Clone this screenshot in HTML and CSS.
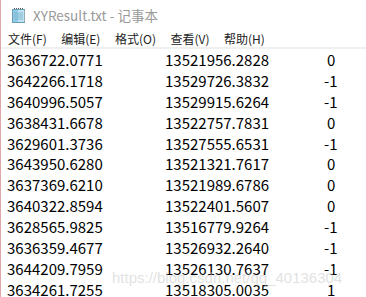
FILE: index.html
```html
<!DOCTYPE html>
<html>
<head>
<meta charset="utf-8">
<link rel="stylesheet" href="styles.css">
</head>
<body>
<div class="win">
  <div class="titlebar">
    <svg class="icon" width="16" height="16" viewBox="0 0 16 16">
      <rect x="1.5" y="2.5" width="12" height="13" fill="#bfe3f3" stroke="#6a9fb8"/>
      <rect x="2" y="3" width="5" height="12" fill="#8fcbe6"/>
      <line x1="3" y1="6" x2="12" y2="6" stroke="#7fb6cf"/>
      <line x1="3" y1="8" x2="12" y2="8" stroke="#7fb6cf"/>
      <line x1="3" y1="10" x2="12" y2="10" stroke="#7fb6cf"/>
      <line x1="3" y1="12" x2="12" y2="12" stroke="#7fb6cf"/>
      <path d="M3 1.5 h10" stroke="#555" stroke-dasharray="1 1"/>
      <path d="M13.5 3 v12" stroke="#9aa" />
    </svg>
    <span class="title">XYResult.txt - 记事本</span>
  </div>
  <div class="menubar">
    <span>文件(F)</span>
    <span>编辑(E)</span>
    <span>格式(O)</span>
    <span>查看(V)</span>
    <span>帮助(H)</span>
  </div>
  <div class="content">
    <div class="row"><span>3636722.0771</span><span>13521956.2828</span><span class="z">0</span></div>
    <div class="row"><span>3642266.1718</span><span>13529726.3832</span><span class="n">-1</span></div>
    <div class="row"><span>3640996.5057</span><span>13529915.6264</span><span class="n">-1</span></div>
    <div class="row"><span>3638431.6678</span><span>13522757.7831</span><span class="z">0</span></div>
    <div class="row"><span>3629601.3736</span><span>13527555.6531</span><span class="n">-1</span></div>
    <div class="row"><span>3643950.6280</span><span>13521321.7617</span><span class="z">0</span></div>
    <div class="row"><span>3637369.6210</span><span>13521989.6786</span><span class="z">0</span></div>
    <div class="row"><span>3640322.8594</span><span>13522401.5607</span><span class="z">0</span></div>
    <div class="row"><span>3628565.9825</span><span>13516779.9264</span><span class="n">-1</span></div>
    <div class="row"><span>3636359.4677</span><span>13526932.2640</span><span class="n">-1</span></div>
    <div class="row"><span>3644209.7959</span><span>13526130.7637</span><span class="n">-1</span></div>
    <div class="row"><span>3634261.7255</span><span>13518305.0035</span><span class="z">1</span></div>
    <div class="watermark">https://blog.csdn.net/qq_40136304</div>
  </div>
</div>
</body>
</html>
```
FILE: styles.css
```css
html, body {
  margin: 0;
  padding: 0;
  background: #fff;
}
.win {
  width: 366px;
  height: 297px;
  overflow: hidden;
  border-left: 1px solid #e0a8a8;
  box-sizing: border-box;
  position: relative;
}
.titlebar {
  height: 29px;
  display: flex;
  align-items: center;
  padding-left: 10px;
  gap: 6px;
}
.icon {
  display: block;
}
.title {
  font-family: "Noto Sans CJK SC", "Noto Sans", sans-serif;
  font-size: 13.5px;
  color: #9a9a9a;
}
.menubar {
  height: 18px;
  display: flex;
  align-items: center;
  padding-left: 7px;
  gap: 14.5px;
  font-family: "Noto Sans CJK SC", "Noto Sans", sans-serif;
  font-size: 12px;
  color: #222;
  border-bottom: 2px solid #f0f0f0;
}
.content {
  position: relative;
  padding-top: 1px;
  font-family: "Noto Sans CJK SC", "Noto Sans", sans-serif;
  font-size: 15px;
  color: #000;
}
.row {
  display: grid;
  grid-template-columns: 158px 152px auto;
  padding-left: 6px;
  height: 20.9px;
  line-height: 20.9px;
}
.z {
  padding-left: 10px;
}
.n {
  padding-left: 7px;
}
.watermark {
  position: absolute;
  left: 111px;
  top: 220px;
  font-family: "Liberation Sans", Arial, sans-serif;
  font-size: 15px;
  color: rgba(200, 200, 200, 0.55);
  white-space: nowrap;
}
```
